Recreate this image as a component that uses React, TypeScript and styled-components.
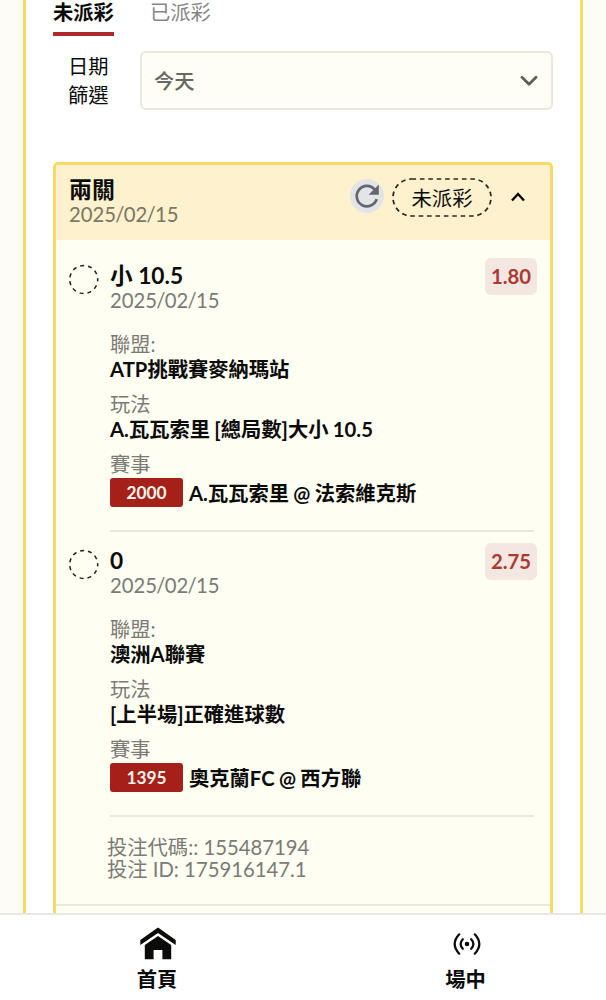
import React from "react";
import styled, { createGlobalStyle } from "styled-components";

const Global = createGlobalStyle`
  *, *::before, *::after { box-sizing: border-box; }
  html, body { margin: 0; padding: 0; height: 100%; overflow: hidden; }
  body {
    font-family: Lato, "Noto Sans CJK TC", sans-serif;
    font-size: 20.3px;
    color: #0b0b0a;
    background: #fefdf4;
  }
`;

const Screen = styled.div`
  display: flex;
  flex-direction: column;
  height: 1000px;
  width: 606px;
  overflow: hidden;
`;

const Content = styled.main`
  display: flex;
  flex-direction: column;
  flex: 1;
  min-height: 0;
  margin: 0 23px;
  padding: 0 27px;
  border: solid #f5da65;
  border-width: 0 3px;
  background: #fff;
  overflow: hidden;
`;

const Tabs = styled.div`
  display: flex;
  gap: 36px;
  flex: none;
  height: 36px;
`;

const Tab = styled.div<{ $active?: boolean }>`
  height: 36px;
  line-height: 24px;
  width: 61px;
  white-space: nowrap;
  font-weight: ${(p) => (p.$active ? 700 : 400)};
  color: ${(p) => (p.$active ? "#0b0b0a" : "#858585")};
  border-bottom: 4px solid ${(p) => (p.$active ? "#b1282b" : "transparent")};
`;

const FilterRow = styled.div`
  display: flex;
  flex: none;
  height: 59px;
  margin-top: 15px;
`;

const FilterLabel = styled.div`
  width: 87px;
  padding: 1px 0 0 15px;
  line-height: 29px;
`;

const Select = styled.div`
  display: flex;
  flex: 1;
  align-items: center;
  justify-content: space-between;
  padding: 0 13px 2px 12px;
  border: 2px solid #e7e8de;
  border-radius: 6px;
  background: #fefef4;
  color: #686863;
  font-weight: 500;
`;

const Card = styled.section`
  flex: none;
  height: 800px;
  margin-top: 52px;
  border: 3px solid #f5da65;
  border-radius: 5px;
  background: #fefef3;
  overflow: hidden;
`;

const CardHeader = styled.header`
  display: flex;
  height: 75px;
  padding: 12px 25px 0 13px;
  background: #fdf1ce;
`;

const HeaderText = styled.div`
  flex: 1;
`;

const HeaderTools = styled.div`
  display: flex;
  align-items: center;
  height: 39px;
  margin-top: 1px;
`;

const Line = styled.div<{ $h: number; $tone?: "muted" | "sand"; $bold?: boolean; $size?: number }>`
  height: ${(p) => p.$h}px;
  line-height: ${(p) => p.$h}px;
  font-size: ${(p) => p.$size ?? 20.3}px;
  font-weight: ${(p) => (p.$bold ? 700 : 400)};
  color: ${(p) => (p.$tone === "muted" ? "#7b7b76" : p.$tone === "sand" ? "#7c7663" : "#0b0b0a")};
  word-spacing: ${(p) => (p.$bold && !p.$size ? "-0.6px" : "normal")};
  white-space: nowrap;
`;

const Slash = styled.span`
  margin: 0 -0.75px;
`;

const RefreshButton = styled.span`
  display: flex;
  align-items: center;
  justify-content: center;
  width: 34px;
  height: 34px;
  margin: -3px 8px 0 0;
  border-radius: 50%;
  background: #e2e4e6;
`;

const Pill = styled.span`
  position: relative;
  display: flex;
  align-items: center;
  justify-content: center;
  width: 100px;
  height: 39px;
  margin-right: 19px;
  padding-top: 2px;
  line-height: 37px;
`;

const Outline = styled.svg`
  position: absolute;
  inset: 0;
`;

const Legs = styled.div`
  padding-top: 10px;
`;

const Leg = styled.article`
  display: grid;
  grid-template-columns: 41px 1fr 52px;
  grid-template-rows: 75px 200px;
  height: 285px;
  padding: 7px 13px 0 13px;
`;

const Dashed = styled.svg`
  margin-top: 7px;
`;

const Odds = styled.div`
  height: 37px;
  margin-top: 1px;
  border-radius: 6px;
  background: #f4e6e0;
  color: #a93a34;
  font-weight: 700;
  line-height: 37px;
  text-align: center;
`;

const Details = styled.div`
  grid-column: 2 / 4;
  margin-right: 3px;
  border-bottom: 2px solid #e7e8de;
`;

const Field = styled.div`
  height: 60px;
`;

const Match = styled.div`
  display: flex;
  align-items: center;
  gap: 6px;
  height: 29px;
  margin-top: 1px;
`;

const MatchNo = styled.span`
  width: 73px;
  height: 29px;
  border-radius: 3px;
  background: #a52019;
  color: #fcf5ec;
  font-size: 17.3px;
  font-weight: 700;
  line-height: 30px;
  text-align: center;
`;

const Codes = styled.footer`
  height: 86px;
  padding: 16px 0 0 51px;
  border-bottom: 2px solid #e7e8de;
`;

const Nav = styled.nav`
  display: grid;
  grid-template-columns: 314px 303px;
  flex: none;
  height: 87px;
  border-top: 2px solid #e7e8e5;
  background: #fff;
`;

const NavItem = styled.div`
  display: flex;
  flex-direction: column;
  align-items: center;
  padding-top: 10px;
  font-weight: 700;
  line-height: 26px;
`;

const NavIcon = styled.span`
  display: flex;
  align-items: center;
  justify-content: center;
  width: 38px;
  height: 38px;
  margin: 0 -1px 3px 1px;
`;

const DateText = ({ parts }: { parts: string[] }) => (
  <>
    {parts.map((part, i) => (
      <React.Fragment key={i}>
        {i > 0 && <Slash>/</Slash>}
        {part}
      </React.Fragment>
    ))}
  </>
);

const betDate = ["2025", "02", "15"];

interface LegData {
  pick: string;
  odds: string;
  league: string;
  market: string;
  no: string;
  teams: string;
}

const legs: LegData[] = [
  { pick: "小 10.5", odds: "1.80", league: "ATP挑戰賽麥納瑪站", market: "A.瓦瓦索里 [總局數]大小 10.5", no: "2000", teams: "A.瓦瓦索里 @ 法索維克斯" },
  { pick: "0", odds: "2.75", league: "澳洲A聯賽", market: "[上半場]正確進球數", no: "1395", teams: "奧克蘭FC @ 西方聯" },
];

export default function App() {
  return (
    <Screen>
      <Global />
      <Content>
        <Tabs>
          <Tab $active>未派彩</Tab>
          <Tab>已派彩</Tab>
        </Tabs>
        <FilterRow>
          <FilterLabel>
            日期
            <br />
            篩選
          </FilterLabel>
          <Select>
            今天
            <svg width="18" height="12" viewBox="0 0 18 12" fill="none" stroke="#5e5e5a" strokeWidth="2.8" strokeLinecap="round" strokeLinejoin="round">
              <path d="M2 3.2 9 10.2l7-7" />
            </svg>
          </Select>
        </FilterRow>
        <Card>
          <CardHeader>
            <HeaderText>
              <Line $h={25} $bold $size={22.9}>兩關</Line>
              <Line $h={24} $tone="sand"><DateText parts={betDate} /></Line>
            </HeaderText>
            <HeaderTools>
              <RefreshButton>
                <svg width="28" height="28" viewBox="0 0 28 28">
                  <path d="M23.7 17.2A10.2 10.2 0 1 1 21.6 7.4" fill="none" stroke="#63666d" strokeWidth="2.7" />
                  <path d="M25.8 2.6v10.2H15.6z" fill="#63666d" />
                </svg>
              </RefreshButton>
              <Pill>
                <Outline width="100" height="39" viewBox="0 0 100 39">
                  <rect x="1" y="1" width="98" height="37" rx="18.5" fill="none" stroke="#2b291f" strokeWidth="1.7" strokeDasharray="4.6 3.8" />
                </Outline>
                未派彩
              </Pill>
              <svg width="14" height="12" viewBox="0 0 14 12" fill="none" stroke="#0b0b0a" strokeWidth="2.5">
                <path d="M1 8.5 7 2l6 6.5" />
              </svg>
            </HeaderTools>
          </CardHeader>
          <Legs>
            {legs.map((leg) => (
              <Leg key={leg.no}>
                <Dashed width="31" height="31" viewBox="0 0 31 31">
                  <circle cx="14.7" cy="15.5" r="14" fill="none" stroke="#222" strokeWidth="1.5" strokeDasharray="4 3.996" strokeDashoffset="2" />
                </Dashed>
                <div>
                  <Line $h={38} $bold $size={22.7}>{leg.pick}</Line>
                  <Line $h={10} $tone="muted"><DateText parts={betDate} /></Line>
                </div>
                <Odds>{leg.odds}</Odds>
                <Details>
                  <Field>
                    <Line $h={25} $tone="muted">聯盟:</Line>
                    <Line $h={24} $bold>{leg.league}</Line>
                  </Field>
                  <Field>
                    <Line $h={25} $tone="muted">玩法</Line>
                    <Line $h={24} $bold>{leg.market}</Line>
                  </Field>
                  <Line $h={25} $tone="muted">賽事</Line>
                  <Match>
                    <MatchNo>{leg.no}</MatchNo>
                    <Line $h={30} $bold>{leg.teams}</Line>
                  </Match>
                </Details>
              </Leg>
            ))}
          </Legs>
          <Codes>
            <Line $h={22} $tone="muted">投注代碼:: 155487194</Line>
            <Line $h={22} $tone="muted">投注 ID: 175916147.1</Line>
          </Codes>
        </Card>
      </Content>
      <Nav>
        <NavItem>
          <NavIcon>
            <svg width="38" height="38" viewBox="0 0 38 38" fill="#0b0b0a">
              <path d="M19 2.5 1.3 15v5L19 7.9 36.7 20v-5z" />
              <path d="M19 11 5.8 20V34.2h8.8V25h8.8v9.2h8.8V20z" />
            </svg>
          </NavIcon>
          首頁
        </NavItem>
        <NavItem>
          <NavIcon>
            <svg width="30" height="24" viewBox="0 0 30 24" fill="none" stroke="#0b0b0a" strokeWidth="2.2" strokeLinecap="round">
              <circle cx="15" cy="12" r="2.3" fill="#0b0b0a" stroke="none" />
              <path d="M10.8 7.2q-4.4 4.8 0 9.6M19.2 7.2q4.4 4.8 0 9.6M7.2 2.3q-9 9.7 0 19.4M22.8 2.3q9 9.7 0 19.4" />
            </svg>
          </NavIcon>
          場中
        </NavItem>
      </Nav>
    </Screen>
  );
}
